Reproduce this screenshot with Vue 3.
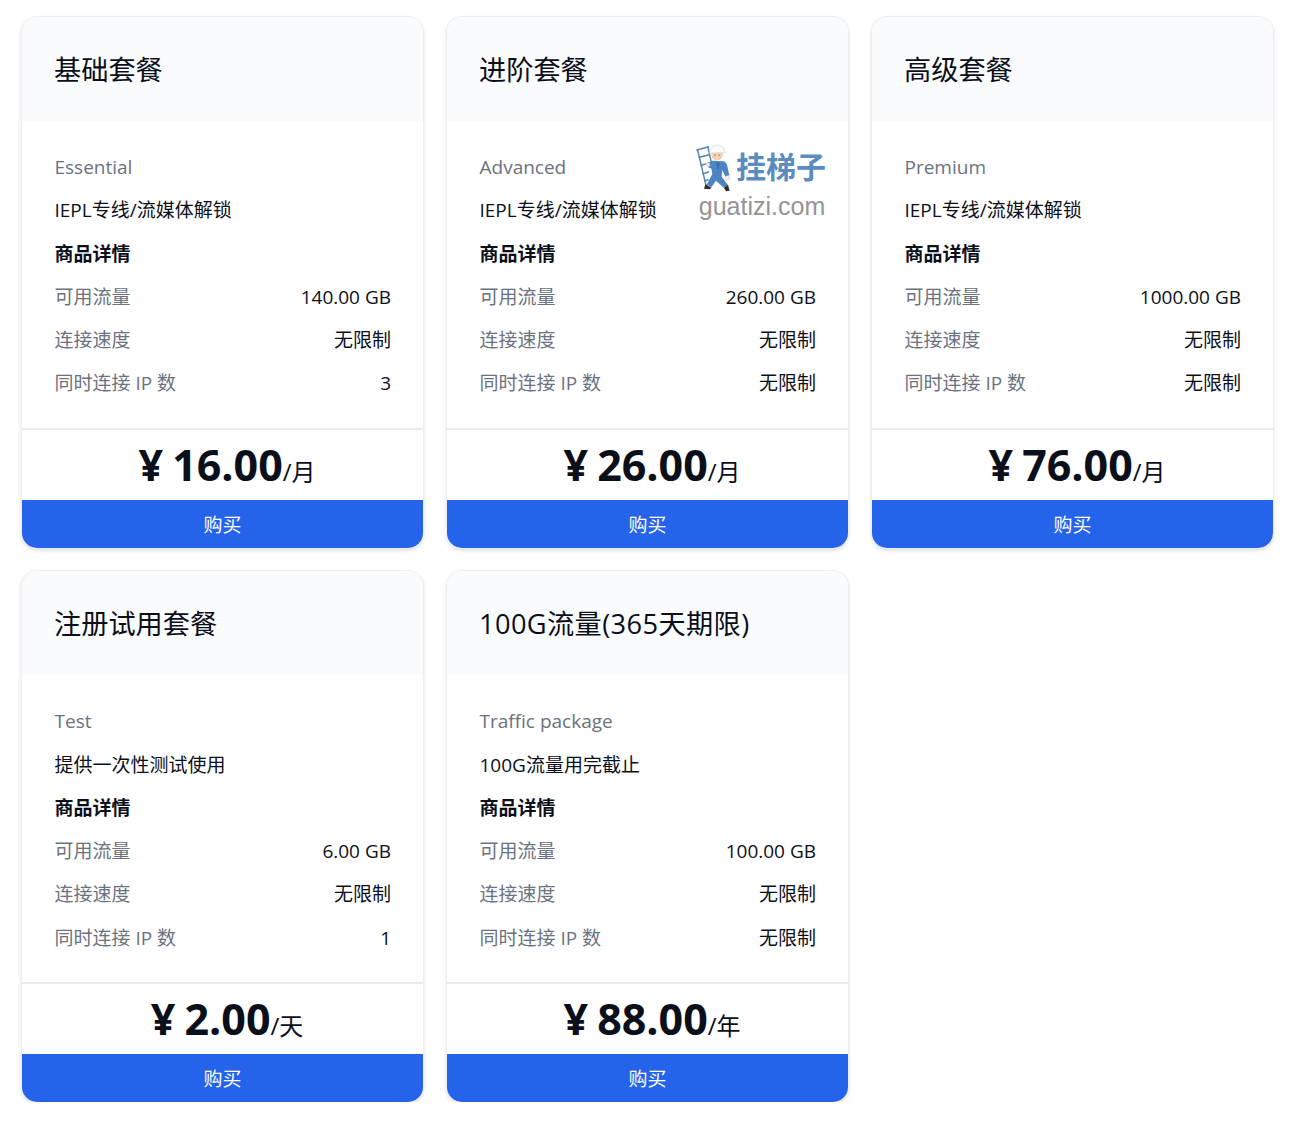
<template>
  <div class="plans">
    <div v-for="plan in plans" :key="plan.name" class="plan-card">
      <div class="plan-header">
        <h2 class="plan-name" :class="{ wide: plan.wide }">{{ plan.name }}</h2>
      </div>
      <div class="plan-body">
        <p class="plan-sub">{{ plan.sub }}</p>
        <p class="plan-desc">{{ plan.desc }}</p>
        <p class="plan-detail">商品详情</p>
        <div class="plan-row">
          <span>可用流量</span><b>{{ plan.traffic }}</b>
        </div>
        <div class="plan-row">
          <span>连接速度</span><b>无限制</b>
        </div>
        <div class="plan-row">
          <span>同时连接 IP 数</span><b>{{ plan.ips }}</b>
        </div>
      </div>
      <div class="plan-price">
        <span class="amount">¥ {{ plan.price }}</span><span class="unit">/{{ plan.unit }}</span>
      </div>
      <button class="buy-btn">购买</button>
      <div v-if="plan.mark" class="watermark">
        <div class="mark-top">
          <svg width="35" height="50" viewBox="0 0 105 150">
            <g fill="none" stroke="#5b86b0" stroke-width="4.5" stroke-linecap="round">
              <path d="M5 24 L30 130" />
              <path d="M36 16 L47 66" />
              <path d="M3 24 L37 14" />
              <path d="M10 46 L40 38" />
              <path d="M15 70 L44 62" />
              <path d="M21 95 L38 90" />
              <path d="M26 116 L36 113" />
            </g>
            <path d="M34 64 L50 56 L84 58 Q92 62 94 72 L100 100 L88 104 L79 84 L77 104 L96 130 L84 138 L60 116 L46 136 L32 128 L49 96 L46 80 L34 74 Z" fill="#4d85c4" />
            <path d="M60 62 L72 62 L66 84 Z" fill="#3a6ea8" />
            <circle cx="63" cy="38" r="17" fill="#f7d0a9" />
            <circle cx="57" cy="39" r="1.8" fill="#333" />
            <circle cx="69" cy="39" r="1.8" fill="#333" />
            <path d="M41 30 C41 4 85 2 86 28 L88 32 L40 33 Z" fill="#fafafa" stroke="#c4c4c4" stroke-width="1.5" />
            <circle cx="94" cy="108" r="7" fill="#f4f4f4" stroke="#b5b5b5" stroke-width="1.2" />
            <circle cx="36" cy="68" r="6" fill="#f4f4f4" stroke="#b5b5b5" stroke-width="1.2" />
            <path d="M28 127 L46 137 L42 142 L24 140 Z" fill="#2c2c2c" />
            <path d="M84 138 L96 128 L101 146 L90 148 Z" fill="#2c2c2c" />
          </svg>
          <span class="mark-cn">挂梯子</span>
        </div>
        <div class="mark-en">guatizi.com</div>
      </div>
    </div>
  </div>
</template>

<script setup>
const plans = [
  { name: '基础套餐', sub: 'Essential', desc: 'IEPL专线/流媒体解锁', traffic: '140.00 GB', ips: '3', price: '16.00', unit: '月' },
  { name: '进阶套餐', sub: 'Advanced', desc: 'IEPL专线/流媒体解锁', traffic: '260.00 GB', ips: '无限制', price: '26.00', unit: '月', mark: true },
  { name: '高级套餐', sub: 'Premium', desc: 'IEPL专线/流媒体解锁', traffic: '1000.00 GB', ips: '无限制', price: '76.00', unit: '月' },
  { name: '注册试用套餐', sub: 'Test', desc: '提供一次性测试使用', traffic: '6.00 GB', ips: '1', price: '2.00', unit: '天' },
  { name: '100G流量(365天期限)', sub: 'Traffic package', desc: '100G流量用完截止', traffic: '100.00 GB', ips: '无限制', price: '88.00', unit: '年', wide: true }
]
</script>

<style scoped>
.plans {
  display: grid;
  grid-template-columns: repeat(3, 401px);
  gap: 23.8px 24px;
  padding: 17px 0 0 22px;
  font-family: "Open Sans", "Noto Sans CJK SC", sans-serif;
  color: #0b0f19;
}

.plan-card {
  position: relative;
  display: flex;
  flex-direction: column;
  height: 530.5px;
  box-sizing: border-box;
  background: #fff;
  border-radius: 15px;
  box-shadow: 0 0 0 1px #eceef1, 0 2px 4px rgba(60, 70, 110, 0.22);
  overflow: hidden;
}

.plan-header {
  height: 104px;
  flex: none;
  display: flex;
  align-items: center;
  padding: 0 32px;
  background: #f9fbfc;
}

.plan-name {
  margin: -2px 0 0;
  font-size: 27.2px;
  font-weight: 400;
}

.plan-name.wide {
  letter-spacing: 0.4px;
}

.plan-body {
  flex: 1;
  padding: 25px 32px 0 32.5px;
  font-size: 19px;
  line-height: 43.3px;
}

.plan-body p {
  margin: 0;
}

.plan-sub {
  color: #6b7280;
}

.plan-detail {
  font-weight: 700;
}

.plan-row {
  display: flex;
  justify-content: space-between;
  color: #6b7280;
}

.plan-row b {
  color: #0b0f19;
  font-weight: 400;
}

.plan-price {
  height: 72px;
  flex: none;
  box-sizing: border-box;
  border-top: 2px solid #e9ebef;
  padding-left: 9px;
  display: flex;
  justify-content: center;
  align-items: baseline;
  line-height: 70px;
}

.amount {
  font-size: 43px;
  font-weight: 700;
  word-spacing: -2px;
}

.unit {
  font-size: 24px;
}

.buy-btn {
  height: 48px;
  flex: none;
  border: 0;
  padding: 0;
  background: #2563eb;
  color: #fff;
  font: inherit;
  font-size: 19px;
}

.watermark {
  position: absolute;
  top: 125px;
  left: 249px;
  text-align: center;
}

.mark-top {
  display: flex;
  align-items: flex-start;
  gap: 5px;
}

.mark-cn {
  margin-top: 3px;
  font-size: 30px;
  line-height: 44px;
  font-weight: 700;
  color: #5b8cbf;
}

.mark-en {
  margin-top: -1px;
  padding-left: 2px;
  font-family: "Liberation Sans", sans-serif;
  font-size: 25px;
  line-height: 30px;
  color: #949494;
}
</style>

<style>
body {
  background: #fff;
}
</style>
